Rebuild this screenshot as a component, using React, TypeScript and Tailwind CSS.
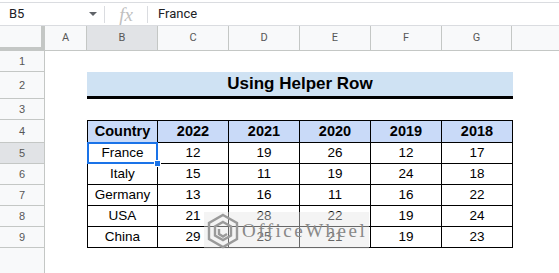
import React from 'react';

const cols = ['A', 'B', 'C', 'D', 'E', 'F', 'G'];
const colW: Record<string, string> = {
  A: 'w-[42px]',
  B: 'w-[71px]',
  C: 'w-[71px]',
  D: 'w-[71px]',
  E: 'w-[71px]',
  F: 'w-[71px]',
  G: 'w-[70px]',
};

const years = ['2022', '2021', '2020', '2019', '2018'];
const data: [string, number[]][] = [
  ['France', [12, 19, 26, 12, 17]],
  ['Italy', [15, 11, 19, 24, 18]],
  ['Germany', [13, 16, 11, 16, 22]],
  ['USA', [21, 28, 22, 19, 24]],
  ['China', [29, 25, 21, 19, 23]],
];

// row heights incl. bottom grid line
const rowH = ['h-[21px]', 'h-[27px]', 'h-[21px]', 'h-[23px]', 'h-[21px]', 'h-[21px]', 'h-[21px]', 'h-[21px]', 'h-[21px]'];

function RowHead({ n, selected }: { n: number; selected?: boolean }) {
  return (
    <div
      className={`w-[45px] shrink-0 h-full flex items-center justify-center border-r border-b border-[#c4c7c5] text-[11px] text-[#575757] ${
        selected ? 'bg-[#e1e3e6]' : 'bg-[#f8f9fa]'
      }`}
    >
      {n}
    </div>
  );
}

function Cell({ children, first, head, selected }: { children: React.ReactNode; first?: boolean; head?: boolean; selected?: boolean }) {
  return (
    <div
      className={`relative w-[71px] h-full flex items-center justify-center border-r border-b border-black ${first ? 'border-l' : ''} ${
        head ? 'border-t bg-[#c9daf8] font-bold text-[14.5px]' : 'text-[13.5px]'
      }`}
    >
      {children}
      {selected && (
        <>
          <div className="absolute -left-[1px] -top-[1px] -right-[1px] -bottom-[1px] border-2 border-[#1a73e8] z-10" />
          <div className="absolute -right-[4px] -bottom-[4px] w-[7px] h-[7px] bg-[#1a73e8] border border-white z-20" />
        </>
      )}
    </div>
  );
}

// faded site logo lying over the table
function Watermark() {
  return (
    <div className="absolute left-[204px] top-[212px] h-[37px] pr-[2px] bg-[#e6e6e6]/45 flex items-center pl-[2px] gap-[2px]">
      <svg className="shrink-0" width="34" height="36" viewBox="0 0 34 36" fill="none" stroke="#9a9a9a" strokeWidth="2.4">
        <path d="M17 2 L31 10 L31 26 L17 34 L3 26 L3 10 Z" />
        <path d="M17 9 L25 13.5 L25 22.5 L17 27 L9 22.5 L9 13.5 Z" />
        <path d="M13 16 L13 21 L17 23.5 L21 21" />
      </svg>
      <span className="whitespace-nowrap font-['Liberation_Serif',serif] text-[19px] tracking-[2.5px] text-[#888888] leading-none">OfficeWheel</span>
    </div>
  );
}

export default function App() {
  return (
    <div className="relative w-[559px] h-[273px] overflow-hidden bg-white font-['Roboto',sans-serif]">
      {/* formula bar */}
      <div className="h-[2px]" />
      <div className="h-[24px] flex items-center border-t border-b border-[#dadce0] text-[13px] text-[#202124]">
        <div className="w-[104px] flex items-center justify-between pl-[9px] pr-[7px]">
          <span>B5</span>
          <svg width="8" height="4" viewBox="0 0 8 4">
            <path d="M0 0 L8 0 L4 4 Z" fill="#5f6368" />
          </svg>
        </div>
        <div className="w-px h-[17px] bg-[#dadce0]" />
        <div className="w-[42px] flex justify-center font-['Liberation_Serif',serif] italic text-[19px] text-[#c0c0c0] leading-none">
          fx
        </div>
        <div className="w-px h-[17px] bg-[#dadce0]" />
        <div className="pl-[10px]">France</div>
      </div>

      {/* column headers */}
      <div className="h-[25px] flex">
        <div className="w-[45px] shrink-0 bg-[#f8f9fa] border-r-4 border-b-4 border-[#c4c7c5]" />
        {cols.map((c) => (
          <div
            key={c}
            className={`${colW[c]} shrink-0 flex items-center justify-center border-r border-b border-[#c4c7c5] text-[11px] text-[#575757] ${
              c === 'B' ? 'bg-[#e1e3e6]' : 'bg-[#f8f9fa]'
            }`}
          >
            {c}
          </div>
        ))}
        <div className="flex-1 bg-[#f8f9fa] border-b border-[#c4c7c5]" />
      </div>

      {/* sheet rows */}
      <div className="font-['Liberation_Sans',Arial,sans-serif] text-black">
        {rowH.map((h, i) => {
          const n = i + 1;
          let content: React.ReactNode = null;
          if (n === 2) {
            content = (
              <div className="w-[426px] h-full bg-[#cfe2f3] border-b-[3px] border-black flex items-center justify-center font-bold text-[17px]">
                Using Helper Row
              </div>
            );
          } else if (n === 4) {
            content = (
              <div className="flex h-full">
                <Cell first head>Country</Cell>
                {years.map((y) => (
                  <Cell key={y} head>{y}</Cell>
                ))}
              </div>
            );
          } else if (n >= 5) {
            const [country, vals] = data[n - 5];
            content = (
              <div className="flex h-full">
                <Cell first selected={n === 5}>{country}</Cell>
                {vals.map((v, j) => (
                  <Cell key={j}>{v}</Cell>
                ))}
              </div>
            );
          }
          return (
            <div key={n} className={`${h} flex`}>
              <RowHead n={n} selected={n === 5} />
              <div className="w-[42px] shrink-0" />
              {content}
            </div>
          );
        })}
        <div className="h-[30px] flex">
          <div className="w-[45px] h-full bg-[#f8f9fa] border-r border-[#c4c7c5]" />
        </div>
      </div>

      <Watermark />
    </div>
  );
}
